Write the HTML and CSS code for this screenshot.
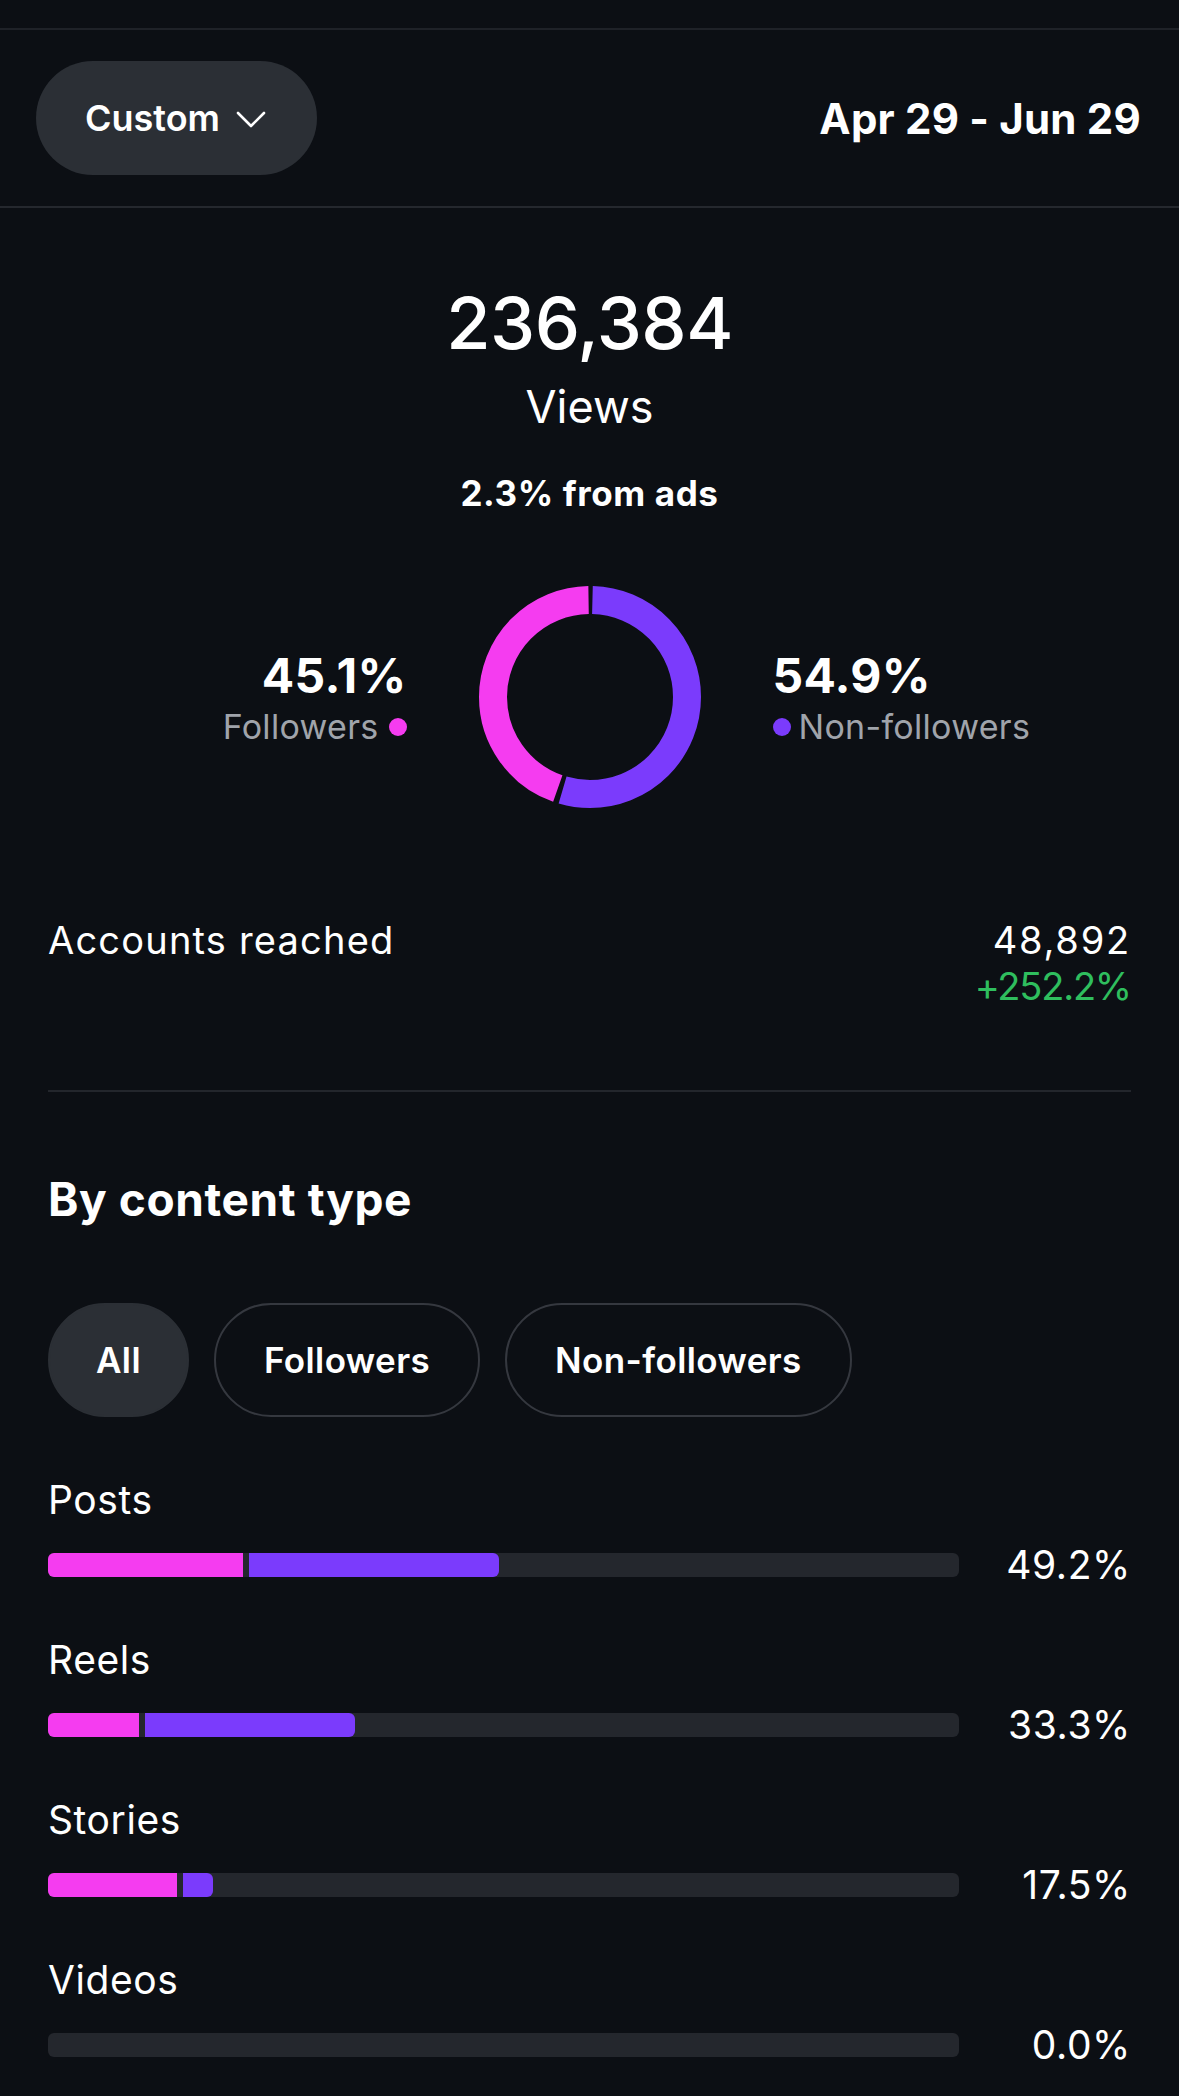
FILE: index.html
```html
<!DOCTYPE html>
<html lang="en">
<head>
<meta charset="utf-8">
<title>Views insights</title>
<link rel="stylesheet" href="styles.css">
</head>
<body>
<div class="topbar"></div>
<header class="range">
  <button class="pill">
    <span>Custom</span>
    <svg class="chev" width="30" height="17" viewBox="0 0 30 17"><path d="M2 2 L15 15 L28 2" fill="none" stroke="#fff" stroke-width="2.6" stroke-linecap="round" stroke-linejoin="round"/></svg>
  </button>
  <div class="dates">Apr 29 - Jun 29</div>
</header>
<main class="content">
  <section class="summary">
    <div class="total">236,384</div>
    <div class="total-label">Views</div>
    <div class="ads">2.3% from ads</div>
    <div class="split">
      <div class="side side-left">
        <div class="side-pct">45.1%</div>
        <div class="legend">Followers<span class="dot dot-pink"></span></div>
      </div>
      <svg class="donut" width="222" height="222" viewBox="0 0 222 222">
        <g transform="rotate(-90 111 111)">
          <circle cx="111" cy="111" r="97" fill="none" stroke="#7b3bfc" stroke-width="28" stroke-dasharray="329.6 609.47" stroke-dashoffset="-2.5"/>
          <circle cx="111" cy="111" r="97" fill="none" stroke="#f53cf0" stroke-width="28" stroke-dasharray="269.9 609.47" stroke-dashoffset="-337.1"/>
        </g>
      </svg>
      <div class="side side-right">
        <div class="side-pct">54.9%</div>
        <div class="legend"><span class="dot dot-purple"></span>Non-followers</div>
      </div>
    </div>
  </section>

  <section class="reach">
    <div class="reach-label">Accounts reached</div>
    <div class="reach-values">
      <div>48,892</div>
      <div class="up">+252.2%</div>
    </div>
  </section>

  <hr class="divider">

  <h2 class="section-title">By content type</h2>

  <div class="chips">
    <button class="chip chip-active">All</button>
    <button class="chip">Followers</button>
    <button class="chip">Non-followers</button>
  </div>

  <div class="types">
    <div class="type">
      <div class="type-label">Posts</div>
      <div class="type-row">
        <div class="track"><span class="seg seg-pink" style="width:21.4%"></span><span class="seg seg-purple" style="width:27.4%"></span></div>
        <div class="type-pct">49.2%</div>
      </div>
    </div>
    <div class="type">
      <div class="type-label">Reels</div>
      <div class="type-row">
        <div class="track"><span class="seg seg-pink" style="width:10.0%"></span><span class="seg seg-purple" style="width:23.05%"></span></div>
        <div class="type-pct">33.3%</div>
      </div>
    </div>
    <div class="type">
      <div class="type-label">Stories</div>
      <div class="type-row">
        <div class="track"><span class="seg seg-pink" style="width:14.2%"></span><span class="seg seg-purple" style="width:3.2%"></span></div>
        <div class="type-pct">17.5%</div>
      </div>
    </div>
    <div class="type">
      <div class="type-label">Videos</div>
      <div class="type-row">
        <div class="track"></div>
        <div class="type-pct">0.0%</div>
      </div>
    </div>
  </div>
</main>
</body>
</html>
```

FILE: styles.css
```css
* { box-sizing: border-box; }
html, body {
  margin: 0;
  padding: 0;
  background: #0c0f14;
  color: #ffffff;
  font-family: Inter, "Liberation Sans", sans-serif;
}
body { width: 1179px; min-height: 2096px; overflow: hidden; }

.topbar {
  height: 30px;
  border-bottom: 2px solid #1f2228;
}

.range {
  height: 178px;
  display: flex;
  align-items: center;
  justify-content: space-between;
  padding: 0 38px 0 36px;
  border-bottom: 2px solid #25282e;
}
.pill {
  height: 114px;
  border: none;
  border-radius: 57px;
  background: #2b2f35;
  color: #fff;
  font-family: inherit;
  font-size: 36px;
  font-weight: 600;
  display: flex;
  align-items: center;
  gap: 16px;
  padding: 0 51px 0 49px;
}
.chev { display: block; margin-top: 2px; }
.dates {
  font-size: 42px;
  font-weight: 700;
  letter-spacing: 0.2px;
}

.content { padding: 0 48px; }

.summary {
  padding-top: 72px;
  display: flex;
  flex-direction: column;
  align-items: center;
}
.total {
  font-size: 72px;
  font-weight: 500;
  line-height: 86px;
  letter-spacing: -0.5px;
}
.total-label {
  margin-top: 14px;
  font-size: 45px;
  line-height: 54px;
}
.ads {
  margin-top: 39px;
  font-size: 35px;
  font-weight: 700;
  line-height: 41px;
  letter-spacing: 0.6px;
}
.split {
  margin-top: 72px;
  width: 100%;
  display: grid;
  grid-template-columns: 1fr auto 1fr;
  column-gap: 72px;
  align-items: center;
}
.donut { display: block; }
.side { display: flex; flex-direction: column; padding-top: 4px; }
.side-left { justify-self: end; align-items: flex-end; }
.side-right { justify-self: start; align-items: flex-start; }
.side-pct {
  font-size: 48px;
  font-weight: 700;
  line-height: 52px;
  letter-spacing: 0.3px;
}
.legend {
  margin-top: 4px;
  font-size: 34px;
  line-height: 42px;
  color: #a0a4ab;
  display: flex;
  align-items: center;
  gap: 8px;
  letter-spacing: 0.3px;
}
.dot {
  width: 18px;
  height: 18px;
  border-radius: 50%;
  display: inline-block;
}
.dot-pink { background: #f53cf0; margin-left: 2px; }
.dot-purple { background: #7b3bfc; }

.reach {
  margin-top: 109px;
  display: flex;
  justify-content: space-between;
  align-items: flex-start;
  font-size: 38px;
  line-height: 46px;
}
.reach-label { letter-spacing: 1.2px; }
.reach-values { text-align: right; letter-spacing: 1.8px; }
.reach-values .up { color: #2fbe5e; line-height: 47px; letter-spacing: -1.2px; }

.divider {
  margin: 80px 0 0;
  border: none;
  height: 2px;
  background: #23262c;
}

.section-title {
  margin: 79px 0 0;
  font-size: 46px;
  font-weight: 700;
  line-height: 56px;
  letter-spacing: 0.6px;
}

.chips {
  margin-top: 76px;
  display: flex;
  gap: 25px;
}
.chip {
  height: 114px;
  border-radius: 57px;
  border: 2px solid #35383f;
  background: transparent;
  color: #fff;
  font-family: inherit;
  font-size: 35px;
  font-weight: 600;
  padding: 0 48px;
  letter-spacing: 0.4px;
}
.chip-active {
  background: #2b2f35;
  border-color: #2b2f35;
  padding: 0 46px;
}

.types {
  margin-top: 59px;
  display: flex;
  flex-direction: column;
  gap: 48px;
}
.type-label {
  font-size: 39px;
  line-height: 47px;
  letter-spacing: 0.6px;
}
.type-row {
  margin-top: 18px;
  display: flex;
  align-items: center;
}
.track {
  flex: 1;
  height: 24px;
  border-radius: 6px;
  background: #24272d;
  overflow: hidden;
  display: flex;
}
.seg { display: block; height: 100%; }
.seg-pink { background: #f53cf0; }
.seg-purple { background: #7b3bfc; margin-left: 6px; border-radius: 0 6px 6px 0; }
.type-pct {
  width: 172px;
  text-align: right;
  font-size: 39px;
  line-height: 47px;
  letter-spacing: 0.6px;
}
```
